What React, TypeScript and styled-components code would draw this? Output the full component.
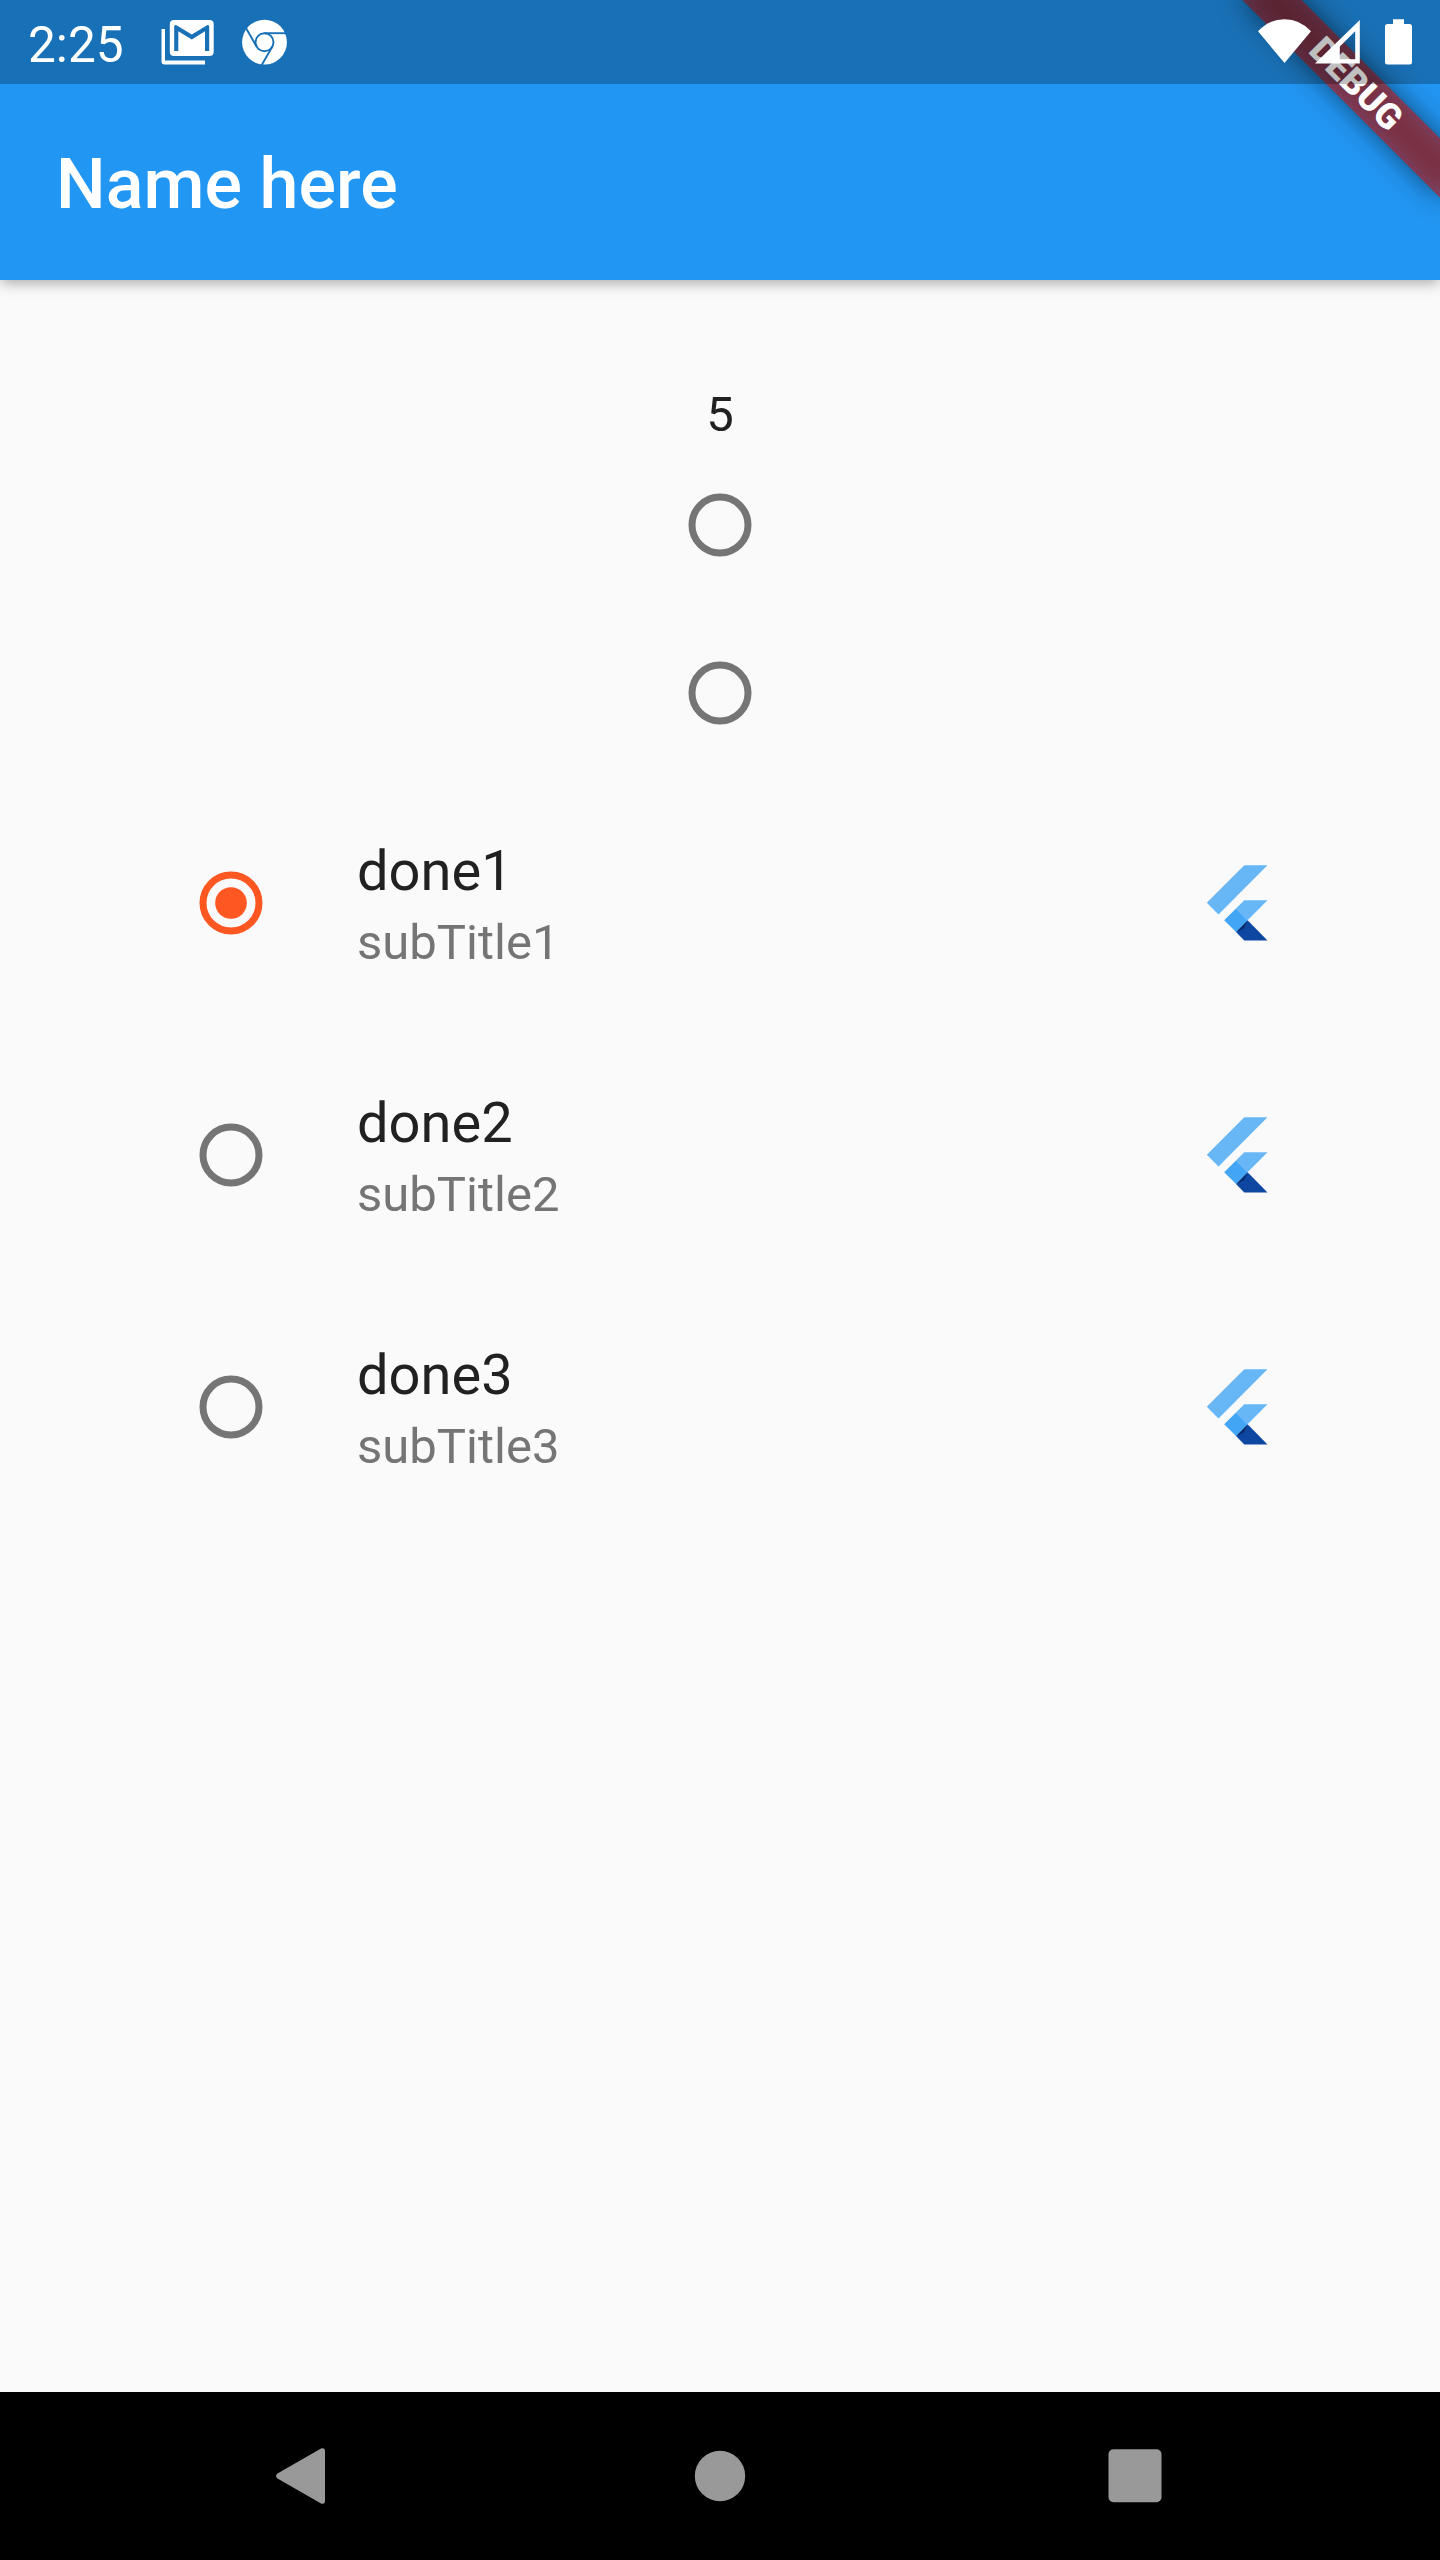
import React, { useState } from "react";
import styled, { createGlobalStyle } from "styled-components";

const GlobalStyle = createGlobalStyle`
  * { box-sizing: border-box; }
  body { margin: 0; background: #fafafa; font-family: Roboto, "Liberation Sans", sans-serif; }
`;

const Screen = styled.div`
  width: 1440px;
  height: 2560px;
  display: flex;
  flex-direction: column;
  overflow: hidden;
  background: #fafafa;
`;

const Header = styled.header`
  position: relative;
  height: 280px;
  flex: none;
  display: flex;
  flex-direction: column;
  background: #2196f3;
  box-shadow: 0 4px 14px rgba(0, 0, 0, 0.2), 0 5px 10px -2px rgba(0, 0, 0, 0.12);
`;

const StatusBar = styled.div`
  position: relative;
  z-index: 2;
  height: 84px;
  display: flex;
  align-items: center;
  padding: 0 28px;
  background: rgba(0, 0, 0, 0.25);
  color: #fff;
`;

const Clock = styled.span`
  width: 133px;
  padding-top: 5px;
  font-size: 49.6px;
  line-height: 58px;
`;

const StatusIcon = styled.svg<{ $gap?: number }>`
  display: block;
  flex: none;
  margin-left: ${(p) => p.$gap ?? 0}px;
  fill: #fff;
`;

const Spacer = styled.div`
  flex: 1;
`;

const Toolbar = styled.div`
  flex: 1;
  display: flex;
  align-items: center;
  padding: 3px 56px 0;
`;

const Title = styled.h1`
  margin: 0;
  color: #fff;
  font-size: 70px;
  font-weight: 500;
  line-height: 82px;
  letter-spacing: 0.05px;
`;

const BannerCorner = styled.div`
  position: absolute;
  top: 0;
  right: 0;
  z-index: 1;
  width: 320px;
  height: 280px;
  overflow: hidden;
`;

const Banner = styled.div`
  position: absolute;
  left: 96px;
  top: 63px;
  width: 280px;
  height: 42px;
  transform: rotate(45deg);
  color: #fff;
  font-size: 35.7px;
  font-weight: 900;
  line-height: 42px;
  text-align: center;

  &::before {
    content: "";
    position: absolute;
    inset: 0;
    z-index: -2;
    background: rgba(0, 0, 0, 0.5);
    filter: blur(13.9px);
  }

  &::after {
    content: "";
    position: absolute;
    inset: 0;
    z-index: -1;
    background: rgba(183, 28, 28, 0.627);
  }
`;

const Content = styled.main`
  flex: 1;
  display: flex;
  flex-direction: column;
  align-items: center;
  padding-top: 105px;
`;

const Counter = styled.div`
  height: 56px;
  color: #212121;
  font-size: 49px;
  line-height: 60px;
`;

const RadioButton = styled.button`
  width: 168px;
  height: 168px;
  flex: none;
  display: flex;
  align-items: center;
  justify-content: center;
  padding: 0;
  border: 0;
  background: none;
`;

const RadioMark = styled.svg<{ $on: boolean }>`
  display: block;
  width: 64px;
  height: 64px;
  color: ${(p) => (p.$on ? "#ff5722" : "#757575")};
`;

const List = styled.div`
  width: 100%;
  display: flex;
  flex-direction: column;
  padding: 0 147px;
`;

const Tile = styled.div`
  height: 252px;
  display: flex;
  align-items: center;
`;

const TileText = styled.div`
  flex: 1;
  padding: 2px 0 0 42px;
`;

const TileTitle = styled.div`
  color: #212121;
  font-size: 56px;
  line-height: 76px;
`;

const TileSubtitle = styled.div`
  height: 66px;
  color: #757575;
  font-size: 49px;
  line-height: 68px;
`;

const Logo = styled.svg`
  display: block;
  width: 84px;
  height: 84px;
  margin-right: 7px;
`;

const NavBar = styled.nav`
  height: 168px;
  flex: none;
  display: flex;
  align-items: center;
  justify-content: space-between;
  padding: 0 252px;
  background: #000;
`;

const NavIcon = styled.svg`
  width: 96px;
  height: 96px;
  fill: #999;
`;

function Radio({ on, onClick }: { on: boolean; onClick?: () => void }) {
  return (
    <RadioButton role="radio" aria-checked={on} onClick={onClick}>
      <RadioMark $on={on} viewBox="0 0 64 64">
        <circle cx="32" cy="32" r="28" fill="none" stroke="currentColor" strokeWidth="7" />
        {on && <circle cx="32" cy="32" r="15.8" fill="currentColor" />}
      </RadioMark>
    </RadioButton>
  );
}

function FlutterLogo() {
  return (
    <Logo viewBox="0 0 84 84">
      <defs>
        <linearGradient id="fold" gradientUnits="userSpaceOnUse" x1="34" y1="70" x2="41" y2="77">
          <stop offset="0" stopColor="#06245c" />
          <stop offset="1" stopColor="#0d47a1" />
        </linearGradient>
      </defs>
      <path d="M42.3 4.2H65.5L16.5 53.4L4.8 41.7Z" fill="#67b7f7" />
      <path d="M42.3 39.2H65.5L45.6 59.2L34 47.4Z" fill="#67b7f7" />
      <path d="M45.6 59.2L65.5 79.4H42.3L34 70.9Z" fill="#0d47a1" />
      <path d="M34 70.9L45.6 59.2L42 67.5Z" fill="url(#fold)" />
      <path d="M34 47.4L45.6 59.2L34 70.9L22.2 59.2Z" fill="#42a5f5" />
    </Logo>
  );
}

const items = [1, 2, 3];

export default function App() {
  const [selected, setSelected] = useState(1);
  return (
    <>
      <GlobalStyle />
      <Screen>
        <Header>
          <StatusBar>
            <Clock>2:25</Clock>
            <StatusIcon width="54" height="46" viewBox="161 19 54 46">
              <path d="M161.5 29H165V60.5H205V64.5H164.5Q161.5 64.5 161.5 61.5Z" />
              <path
                fillRule="evenodd"
                d="M174 20H209.5Q213.7 20 213.7 24.2V51.8Q213.7 56 209.5 56H174Q169.8 56 169.8 51.8V24.2Q169.8 20 174 20ZM174.2 51H178.3V31.2L191.8 39.5L205 31.2V51H209.2V26.5Q209.2 24.8 207.5 25L191.8 34.6L176 25Q174.2 24.8 174.2 26.5Z"
              />
            </StatusIcon>
            <StatusIcon $gap={26} width="47" height="46" viewBox="241 19 47 46">
              <defs>
                <mask id="chromeCuts">
                  <circle cx="264.5" cy="42.2" r="22.4" fill="#fff" />
                  <g fill="none" stroke="#000" strokeWidth="1.9">
                    <circle cx="264.5" cy="42.2" r="9" />
                    <path d="M264.5 33.2H288" />
                    <path d="M264.5 33.2H288" transform="rotate(120 264.5 42.2)" />
                    <path d="M264.5 33.2H288" transform="rotate(240 264.5 42.2)" />
                  </g>
                </mask>
              </defs>
              <rect x="241" y="19" width="47" height="46" mask="url(#chromeCuts)" />
            </StatusIcon>
            <Spacer />
            <StatusIcon width="156" height="46" viewBox="1256 19 156 46">
              <path d="M1284.5 63L1258 31.3Q1269 19.2 1284.5 19.2T1311 31.3Z" />
              <path
                fillRule="evenodd"
                d="M1315 63.5L1359.8 20V63.5ZM1355.2 31.2L1339.8 46.5V59.2H1355.2Z"
              />
              <path d="M1393 19.2H1404V24H1409.5Q1412 24 1412 26.5V62Q1412 64.5 1409.5 64.5H1387.5Q1385 64.5 1385 62V26.5Q1385 24 1387.5 24H1393Z" />
            </StatusIcon>
          </StatusBar>
          <Toolbar>
            <Title>Name here</Title>
          </Toolbar>
          <BannerCorner>
            <Banner>DEBUG</Banner>
          </BannerCorner>
        </Header>
        <Content>
          <Counter>5</Counter>
          <Radio on={false} />
          <Radio on={false} />
          <List>
            {items.map((n) => (
              <Tile key={n}>
                <Radio on={selected === n} onClick={() => setSelected(n)} />
                <TileText>
                  <TileTitle>done{n}</TileTitle>
                  <TileSubtitle>subTitle{n}</TileSubtitle>
                </TileText>
                <FlutterLogo />
              </Tile>
            ))}
          </List>
        </Content>
        <NavBar>
          <NavIcon viewBox="0 0 96 96">
            <path d="M25.5 45.5L69 20.6Q73 19 73 23.5V72.5Q73 77 69 75.4L25.5 50.5Q22.5 48 25.5 45.5Z" />
          </NavIcon>
          <NavIcon viewBox="0 0 96 96">
            <circle cx="48" cy="48" r="25.2" />
          </NavIcon>
          <NavIcon viewBox="0 0 96 96">
            <rect x="16.5" y="21.3" width="53" height="53" rx="5" />
          </NavIcon>
        </NavBar>
      </Screen>
    </>
  );
}
